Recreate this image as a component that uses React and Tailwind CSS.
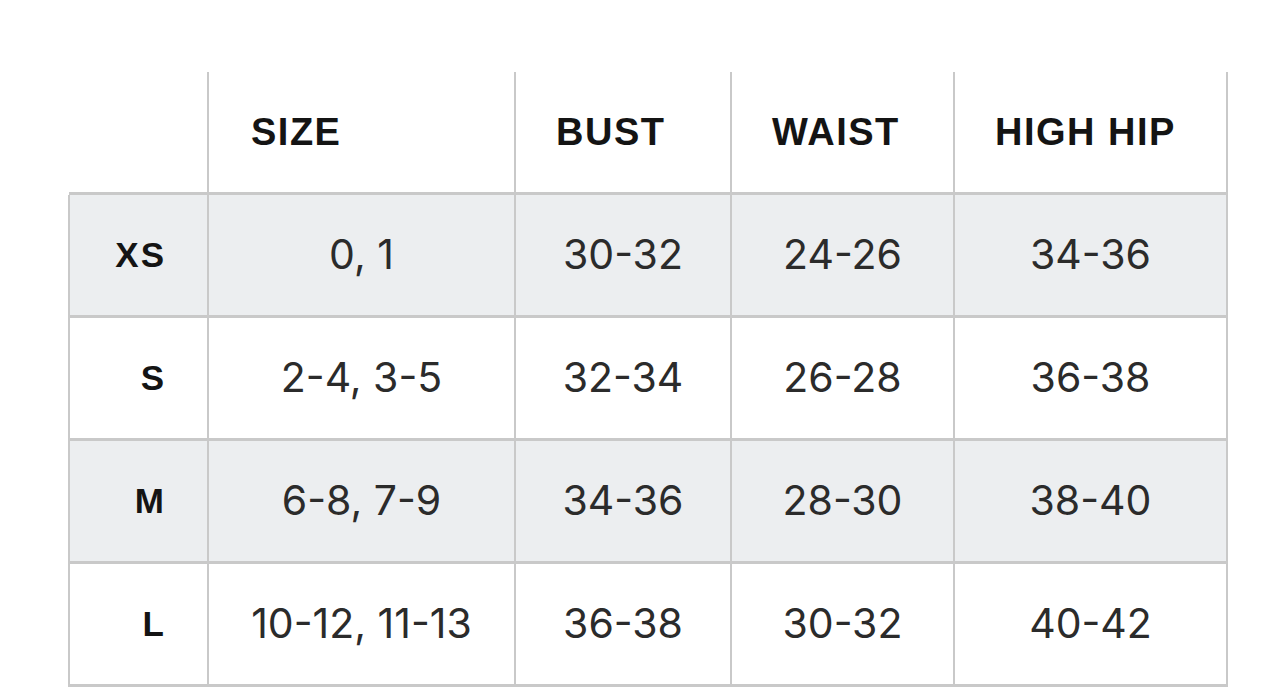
import React from "react";

const rows = [
  { label: "XS", size: "0, 1", bust: "30-32", waist: "24-26", hip: "34-36", gray: true },
  { label: "S", size: "2-4, 3-5", bust: "32-34", waist: "26-28", hip: "36-38", gray: false },
  { label: "M", size: "6-8, 7-9", bust: "34-36", waist: "28-30", hip: "38-40", gray: true },
  { label: "L", size: "10-12, 11-13", bust: "36-38", waist: "30-32", hip: "40-42", gray: false },
];

const head = "font-['Liberation_Sans',Arial,sans-serif] font-bold text-[38px] tracking-[1.5px] text-[#141414]";
const num = "font-['Inter',sans-serif] text-[41px] text-[#2b2b2b] font-normal";

export default function App() {
  return (
    <div className="w-[1284px] h-[689px] bg-white pt-[72px] pl-[68px] overflow-hidden">
      <div className="grid grid-cols-[141px_307px_216px_223px_273px] w-fit">
        <div className="h-[123px] border-r-2 border-b-[3px] border-[#c9c9c9] ml-[1px]" />
        <div className={`h-[123px] border-r-2 border-b-[3px] border-[#c9c9c9] flex items-center pl-[42px] ${head}`}>SIZE</div>
        <div className={`h-[123px] border-r-2 border-b-[3px] border-[#c9c9c9] flex items-center pl-[40px] ${head}`}>BUST</div>
        <div className={`h-[123px] border-r-2 border-b-[3px] border-[#c9c9c9] flex items-center pl-[40px] ${head}`}>WAIST</div>
        <div className={`h-[123px] border-r-2 border-b-[3px] border-[#c9c9c9] flex items-center pl-[40px] ${head}`}>HIGH HIP</div>
        {rows.map((r) => {
          const bg = r.gray ? "bg-[#eceef0]" : "bg-white";
          const cell = `h-[123px] border-r-2 border-b-[3px] border-[#c9c9c9] flex items-center justify-center ${bg} ${num}`;
          return (
            <React.Fragment key={r.label}>
              <div className={`h-[123px] border-l-2 border-r-2 border-b-[3px] border-[#c9c9c9] flex items-center justify-end pr-[41px] ${bg} font-['Liberation_Sans',Arial,sans-serif] font-bold text-[35px] tracking-[2px] text-[#141414]`}>
                {r.label}
              </div>
              <div className={cell}>{r.size}</div>
              <div className={cell}>{r.bust}</div>
              <div className={cell}>{r.waist}</div>
              <div className={cell}>{r.hip}</div>
            </React.Fragment>
          );
        })}
      </div>
    </div>
  );
}
